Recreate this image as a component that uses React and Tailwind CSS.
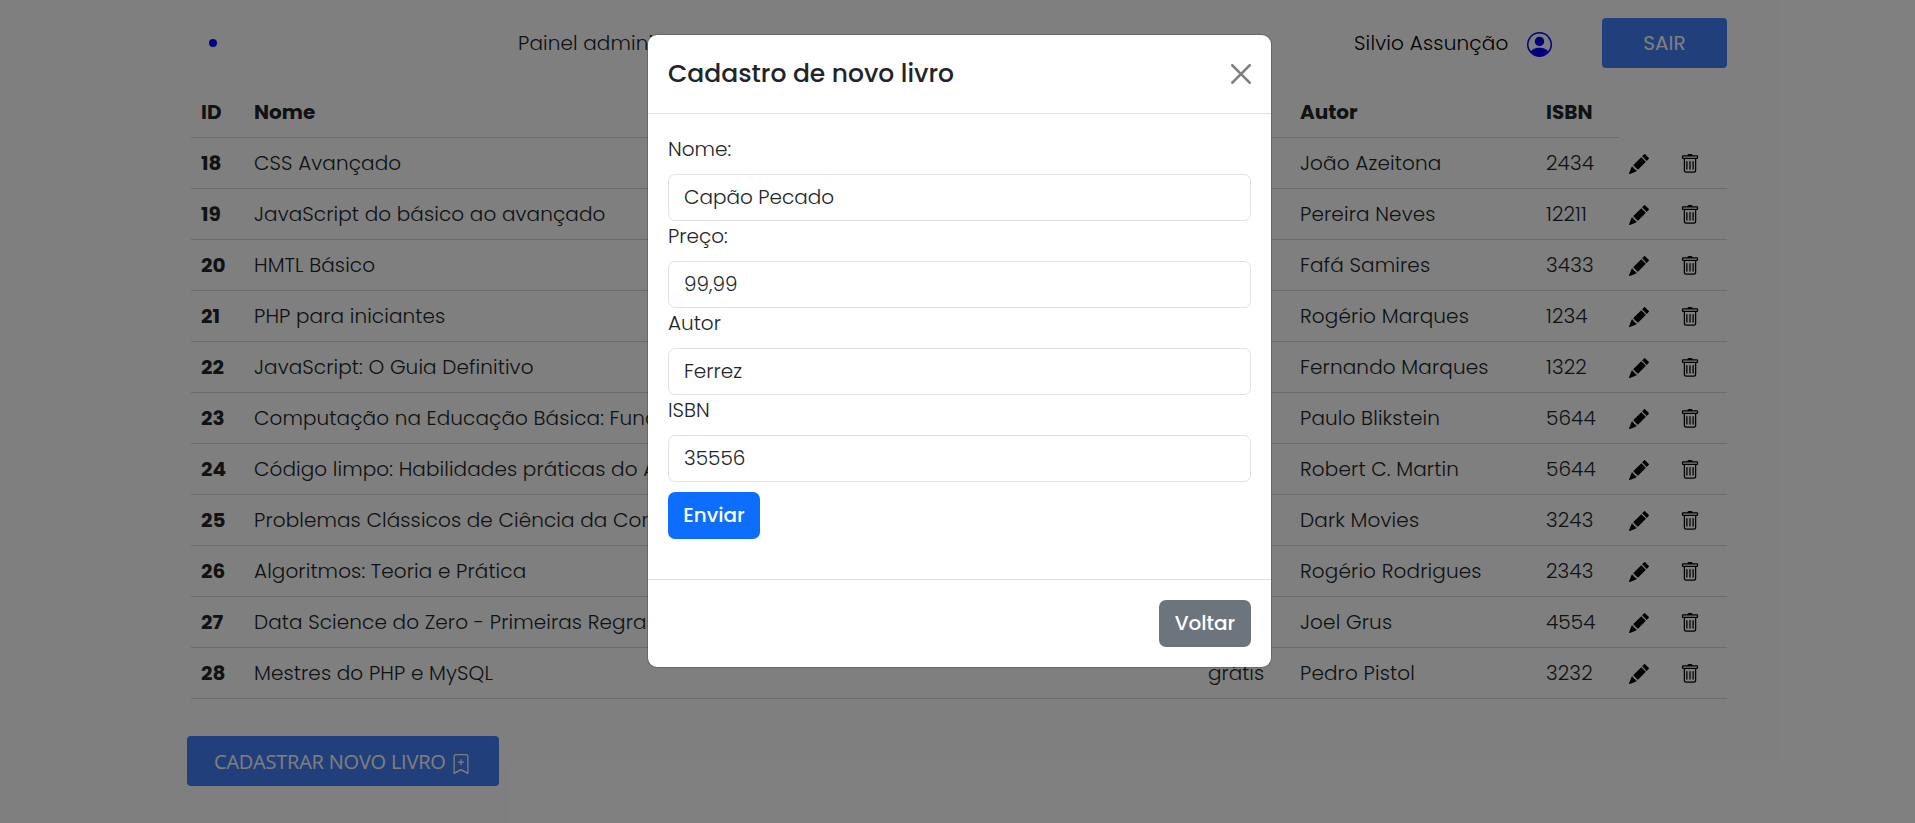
import { BsPersonCircle, BsBookmarkPlus, BsPencilFill, BsTrash } from "react-icons/bs";

const books = [
  ["18", "CSS Avançado", "49,90", "João Azeitona", "2434"],
  ["19", "JavaScript do básico ao avançado", "59,90", "Pereira Neves", "12211"],
  ["20", "HMTL Básico", "39,90", "Fafá Samires", "3433"],
  ["21", "PHP para iniciantes", "29,90", "Rogério Marques", "1234"],
  ["22", "JavaScript: O Guia Definitivo", "89,90", "Fernando Marques", "1322"],
  ["23", "Computação na Educação Básica: Fund", "79,90", "Paulo Blikstein", "5644"],
  ["24", "Código limpo: Habilidades práticas do A", "69,90", "Robert C. Martin", "5644"],
  ["25", "Problemas Clássicos de Ciência da Com", "59,90", "Dark Movies", "3243"],
  ["26", "Algoritmos: Teoria e Prática", "99,90", "Rogério Rodrigues", "2343"],
  ["27", "Data Science do Zero - Primeiras Regras", "49,90", "Joel Grus", "4554"],
  ["28", "Mestres do PHP e MySQL", "grátis", "Pedro Pistol", "3232"],
];

const fields = [
  ["Nome:", "Capão Pecado"],
  ["Preço:", "99,99"],
  ["Autor", "Ferrez"],
  ["ISBN", "35556"],
];

function CloseIcon() {
  return (
    <svg viewBox="0 0 16 16" className="size-5 text-black/50" fill="currentColor">
      <path d="M.293.293a1 1 0 0 1 1.414 0L8 6.586 14.293.293a1 1 0 1 1 1.414 1.414L9.414 8l6.293 6.293a1 1 0 0 1-1.414 1.414L8 9.414l-6.293 6.293a1 1 0 0 1-1.414-1.414L6.586 8 .293 1.707a1 1 0 0 1 0-1.414z" />
    </svg>
  );
}

export default function App() {
  return (
    <div className="relative h-[823px] w-full overflow-hidden bg-white font-[Poppins,Inter,sans-serif] text-[20px] leading-[30px] font-light text-[#212529]">
      <header className="flex h-[87px] items-start pt-[18px] pl-[209px]">
        <div className="mt-[21px] size-2 rounded-full bg-[#00f]" />
        <div className="mt-[10px] ml-[301px] w-[836px] tracking-[0.1px]">Painel administrativo</div>
        <div className="mt-[10px] w-[173px] tracking-[0.18px] text-black">Silvio Assunção</div>
        <BsPersonCircle className="mt-[14px] size-[25px] text-[#00f]" />
        <button className="ml-[50px] h-[50px] w-[125px] rounded-[4px] bg-[#427ef4] font-normal text-white">SAIR</button>
      </header>
      <main className="ml-[191px] w-[1536px]">
        <div className="flex h-[51px] w-[1428px] border-b border-[#d6d9dc] pt-[10px] font-bold">
          <span className="w-[53px] pl-[10px]">ID</span>
          <span className="w-[954px] pl-[10px]">Nome</span>
          <span className="w-[92px] pl-[10px]">Preço</span>
          <span className="w-[246px] pl-[10px]">Autor</span>
          <span className="pl-[10px]">ISBN</span>
        </div>
        {books.map(([id, name, price, author, isbn]) => (
          <div key={id} className="flex h-[51px] border-b border-[#d6d9dc] pt-[10px]">
            <span className="w-[53px] pl-[10px] font-bold">{id}</span>
            <span className="w-[954px] pl-[10px] tracking-[0.1px] whitespace-nowrap">{name}</span>
            <span className="w-[92px] pl-[10px]">{price}</span>
            <span className="w-[246px] pl-[10px] tracking-[0.13px]">{author}</span>
            <span className="w-[93px] pl-[10px] tracking-[0.1px]">{isbn}</span>
            <span className="mt-[6px] w-[51px]"><BsPencilFill className="size-5 text-black" /></span>
            <span className="mt-[6px]"><BsTrash className="size-5 text-black" /></span>
          </div>
        ))}
      </main>
      <button className="mt-[37px] ml-[187px] flex h-[50px] w-[312px] items-center rounded-[4px] bg-[#427ef4] pl-[27px] font-['Open_Sans'] font-normal text-white">
        <span className="w-[237px] pt-[2px] text-left tracking-[-0.22px] whitespace-nowrap">CADASTRAR NOVO LIVRO</span>
        <BsBookmarkPlus className="mt-[6px] size-5 shrink-0" />
      </button>

      <div className="absolute inset-0 flex items-start bg-black/50 pt-[34px] pl-[647px]">
        <section className="w-[625px] rounded-[10px] border border-black/17.5 bg-white bg-clip-padding">
          <div className="flex h-[79px] items-center justify-between border-b border-[#dee2e6] px-5">
            <h5 className="pb-[2px] text-[25px] leading-[37px] font-medium">Cadastro de novo livro</h5>
            <CloseIcon />
          </div>
          <div className="h-[465px] px-5 pt-5">
            {fields.map(([label, value]) => (
              <div key={label}>
                <label className="mb-[10px] block">{label}</label>
                <div className="h-[47px] rounded-[7px] border border-[#dee2e6] px-[15px] py-[7px]">{value}</div>
              </div>
            ))}
            <button className="mt-[10px] h-[47px] w-[92px] rounded-[7px] bg-[#0d6efd] pb-[2px] font-medium text-white">Enviar</button>
          </div>
          <div className="flex h-[88px] justify-end border-t border-[#dee2e6] px-5 pt-5">
            <button className="h-[47px] w-[92px] rounded-[7px] bg-[#6c757d] pb-[2px] font-medium text-white">Voltar</button>
          </div>
        </section>
      </div>
    </div>
  );
}
